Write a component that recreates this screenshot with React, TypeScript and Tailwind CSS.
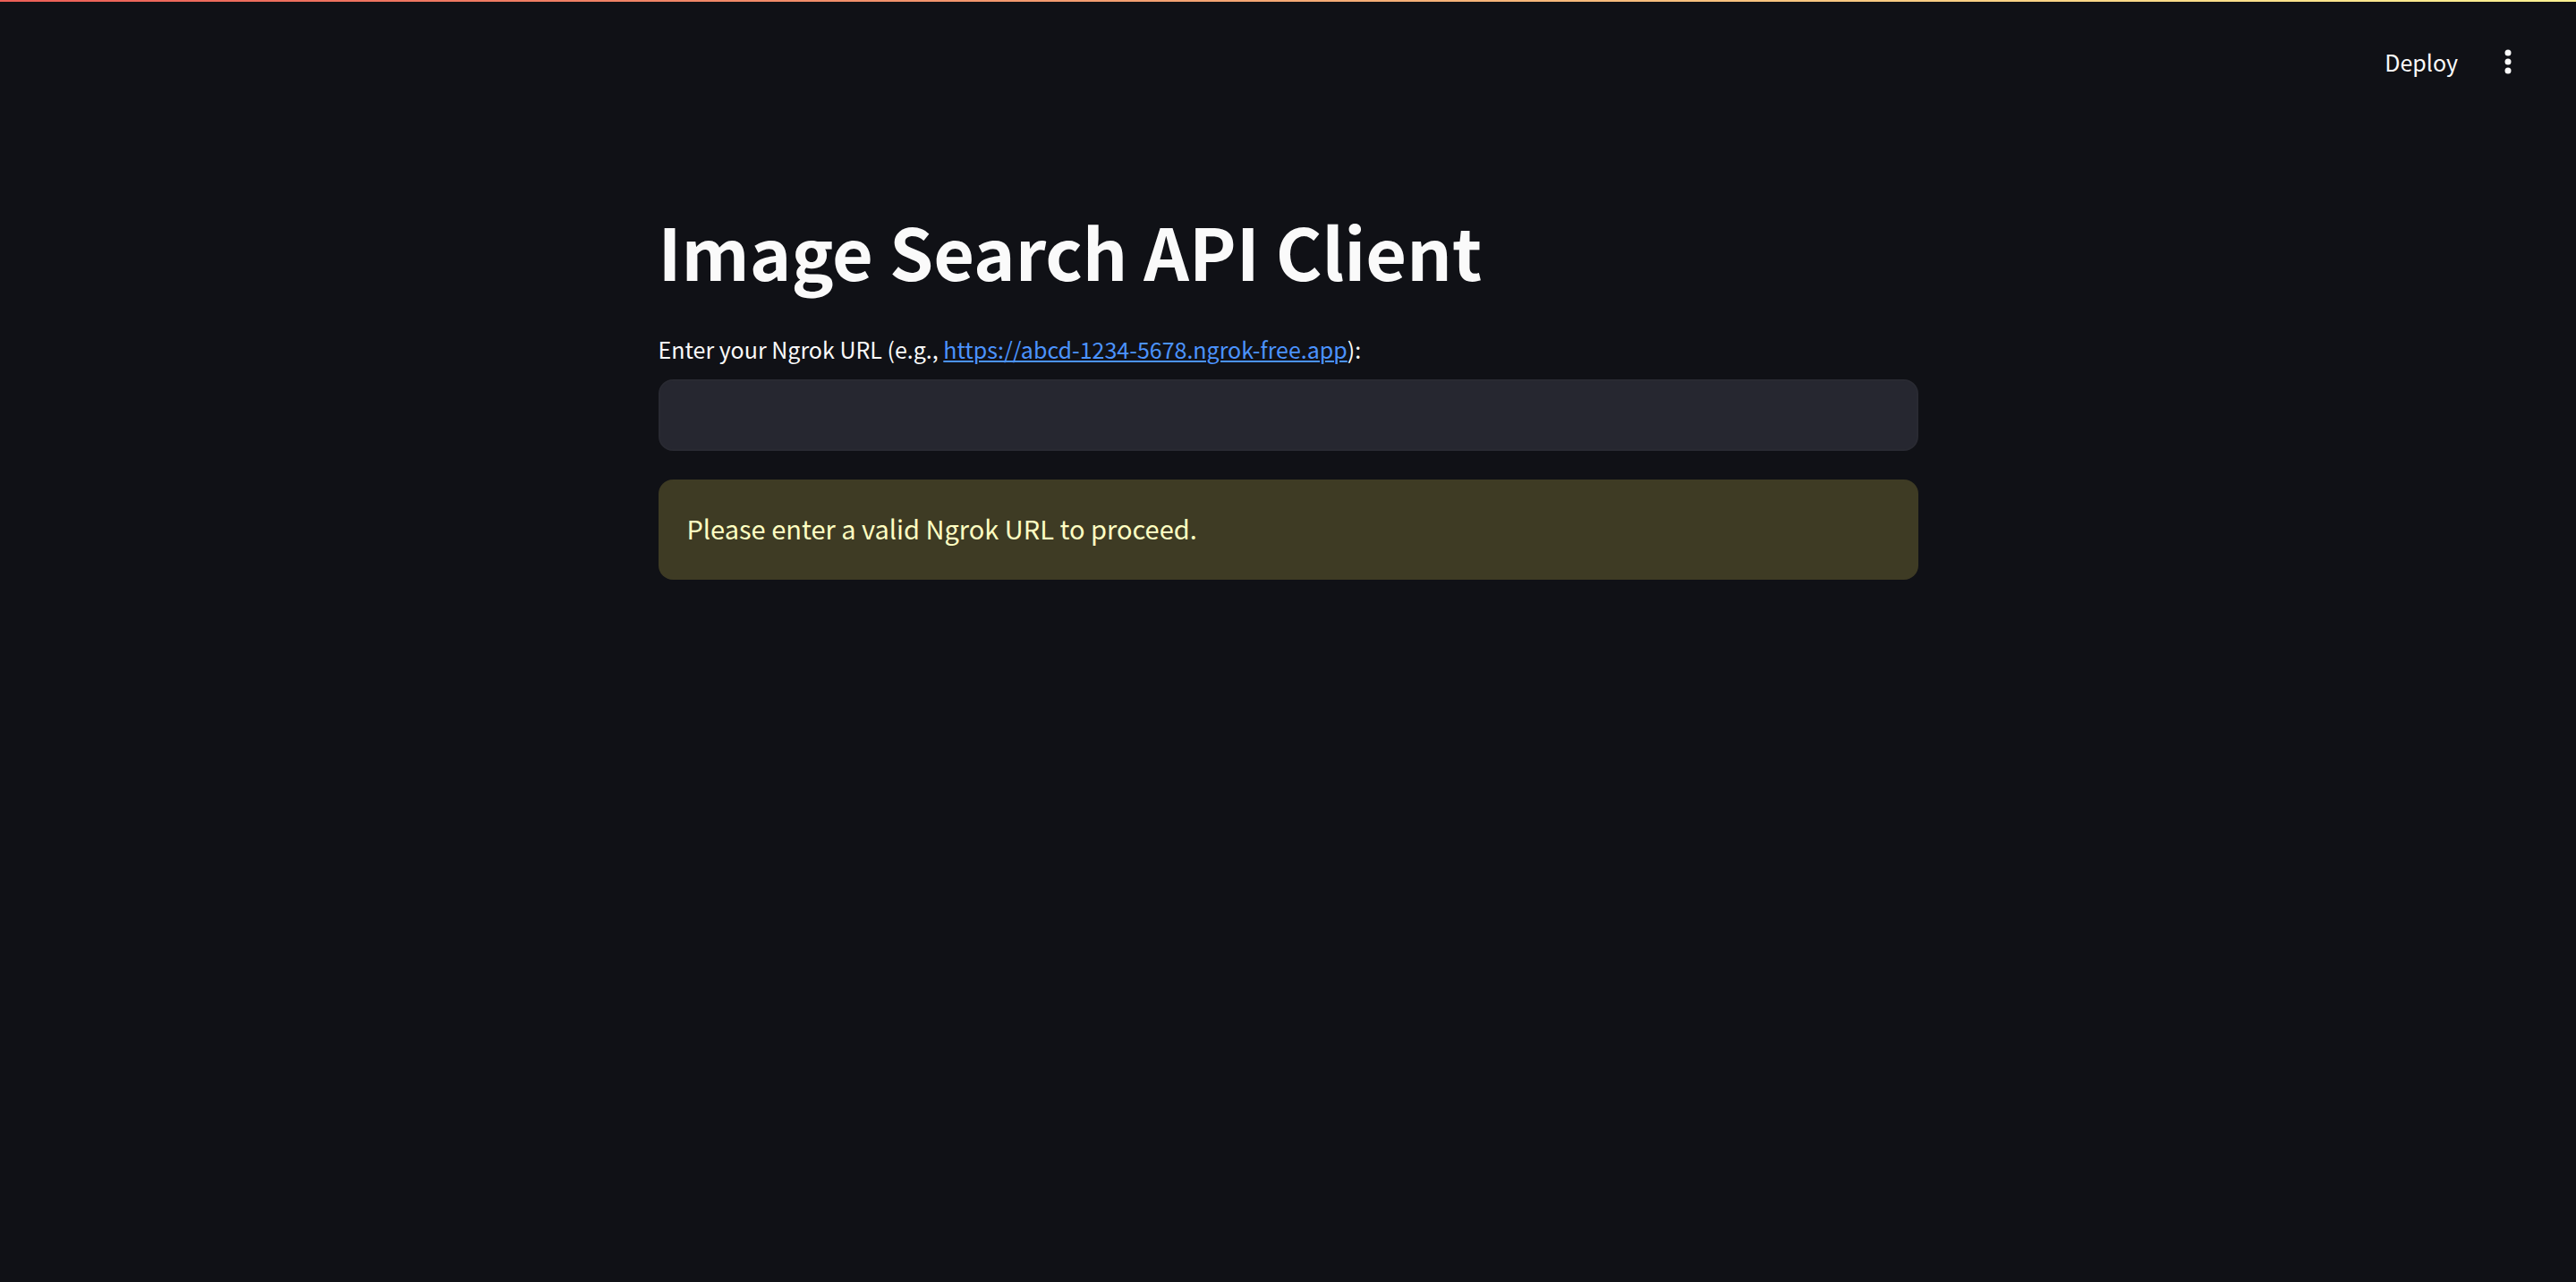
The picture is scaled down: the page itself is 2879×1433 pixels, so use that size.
export default function App() {
  return (
    <div className="flex min-h-screen flex-col bg-[#101116] font-['Noto_Sans_CJK_SC','Noto_Sans',sans-serif] text-[#fafafa]">
      <div className="h-0.5 bg-linear-to-r/srgb from-[#ec5f57] to-[#fdf292]" />
      <header className="flex items-center justify-end gap-9 py-[37px] pr-16">
        <button type="button" className="px-2 text-[25px] leading-15">
          Deploy
        </button>
        <button type="button" aria-label="Main menu" className="p-2">
          <svg viewBox="0 0 8 28" className="h-7 w-2" fill="currentColor" aria-hidden="true">
            <circle cx="4" cy="4" r="3.5" />
            <circle cx="4" cy="14" r="3.5" />
            <circle cx="4" cy="24" r="3.5" />
          </svg>
        </button>
      </header>
      <main className="mx-auto w-full max-w-[1408px] pt-23">
        <h1 className="text-[79px] leading-[104px] font-bold">Image Search API Client</h1>
        <div className="mt-9 flex flex-col gap-3">
          <label htmlFor="ngrok-url" className="text-[25px] leading-11">
            Enter your Ngrok URL (e.g.,{" "}
            <a
              href="https://abcd-1234-5678.ngrok-free.app"
              className="text-[#4b93ff] underline decoration-2 underline-offset-2"
            >
              https://abcd-1234-5678.ngrok-free.app
            </a>
            ):
          </label>
          <input
            id="ngrok-url"
            type="text"
            className="h-20 w-full rounded-2xl border-2 border-[#292a32] bg-[#262730] px-6 text-[28px] outline-none focus:border-[#ff4b4b]"
          />
        </div>
        <div
          role="alert"
          className="mt-8 rounded-2xl bg-[#3e3b24] px-8 pt-[30px] pb-[34px] text-[29px] leading-12 text-[#ffffc2]"
        >
          Please enter a valid Ngrok URL to proceed.
        </div>
      </main>
    </div>
  );
}
